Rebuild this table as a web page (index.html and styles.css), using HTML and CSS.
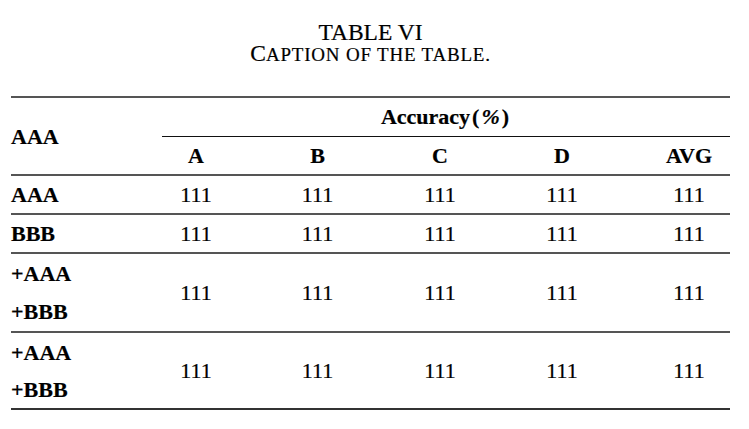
FILE: index.html
```html
<!DOCTYPE html>
<html>
<head>
<meta charset="utf-8">
<link rel="stylesheet" href="styles.css">
</head>
<body>
<div class="page">
  <div class="caption">
    <div class="cap-title">TABLE VI</div>
    <div class="cap-sub"><span class="big">C</span>APTION OF THE TABLE.</div>
  </div>
  <div class="tbl">
    <div class="cell name h-name">AAA</div>
    <div class="cell h-acc">Accuracy<span class="paren">(</span><span class="pct">%</span><span class="paren">)</span></div>
    <div class="cell head">A</div>
    <div class="cell head">B</div>
    <div class="cell head">C</div>
    <div class="cell head">D</div>
    <div class="cell head last">AVG</div>

    <div class="cell name">AAA</div>
    <div class="cell">111</div>
    <div class="cell">111</div>
    <div class="cell">111</div>
    <div class="cell">111</div>
    <div class="cell last">111</div>

    <div class="cell name">BBB</div>
    <div class="cell">111</div>
    <div class="cell">111</div>
    <div class="cell">111</div>
    <div class="cell">111</div>
    <div class="cell last">111</div>

    <div class="cell name double"><span>+AAA</span><span>+BBB</span></div>
    <div class="cell double">111</div>
    <div class="cell double">111</div>
    <div class="cell double">111</div>
    <div class="cell double">111</div>
    <div class="cell double last">111</div>

    <div class="cell name double end"><span>+AAA</span><span>+BBB</span></div>
    <div class="cell double end">111</div>
    <div class="cell double end">111</div>
    <div class="cell double end">111</div>
    <div class="cell double end">111</div>
    <div class="cell double end last">111</div>
  </div>
</div>
</body>
</html>
```

FILE: styles.css
```css
html, body {
  margin: 0;
  padding: 0;
  background: #ffffff;
}
body {
  font-family: "Liberation Serif", "Times New Roman", serif;
  color: #000;
}
.page {
  width: 749px;
  height: 429px;
  overflow: hidden;
}
.caption {
  padding-top: 22px;
  text-align: center;
  font-size: 23.5px;
  line-height: 21px;
  width: 719px;
  margin-left: 11px;
  -webkit-text-stroke: 0.2px #000;
}
.cap-sub {
  font-size: 19px;
  letter-spacing: 0.8px;
}
.cap-sub .big {
  font-size: 23.5px;
  letter-spacing: 0;
}
.tbl {
  margin-top: 31px;
  margin-left: 11px;
  width: 719px;
  display: grid;
  grid-template-columns: 124px 122px 121px 124px 120px 108px;
  border-top: 2px solid #555;
  font-size: 22px;
  -webkit-text-stroke: 0.2px #000;
}
.cell {
  height: 37px;
  line-height: 37px;
  text-align: center;
  border-bottom: 2px solid #555;
  white-space: nowrap;
}
.cell.last {
  padding-left: 26px;
}
.name {
  text-align: left;
  font-weight: bold;
}
.h-name {
  grid-row: 1 / span 2;
  height: auto;
  display: flex;
  align-items: center;
}
.h-acc {
  grid-column: 2 / span 5;
  margin-left: 27px;
  height: 38px;
  line-height: 38px;
  border-bottom: 1px solid #111;
  font-weight: bold;
}
.paren {
  margin: 0 2px;
}
.pct {
  font-style: italic;
}
.head {
  font-weight: bold;
}
.double {
  height: 77px;
  line-height: 77px;
}
.double.end {
  height: 75px;
  line-height: 76px;
  border-bottom-color: #333;
}
.name.double {
  display: flex;
  flex-direction: column;
  line-height: 39px;
}
.name.double span {
  height: 38px;
}
.name.double.end span {
  height: 37px;
}
```
